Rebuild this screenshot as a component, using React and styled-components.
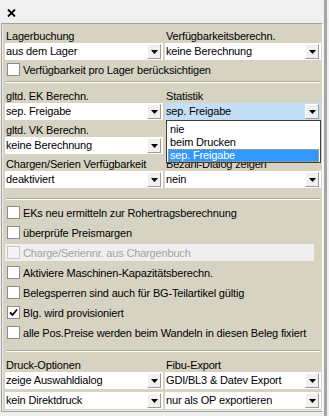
import React from 'react'
import styled, { createGlobalStyle } from 'styled-components'

const GlobalStyle = createGlobalStyle`
  html, body {
    margin: 0;
    padding: 0;
    background: #f0f0f0;
  }
  body {
    font-family: "Liberation Sans", Arial, sans-serif;
    font-size: 11px;
    color: #000;
  }
`

const Window = styled.div`
  width: 327px;
  height: 416px;
  box-sizing: border-box;
  border-right: 3px solid #a5a5a5;
  background: #f0f0f0;
  display: flex;
  flex-direction: column;
  letter-spacing: -0.17px;
`

const TitleBar = styled.div`
  height: 23px;
  flex: none;
  display: flex;
  align-items: flex-start;
  padding: 9px 0 0 7px;
  box-sizing: border-box;
`

const Panel = styled.div`
  margin-left: 1px;
  width: 322px;
  height: 389px;
  box-sizing: border-box;
  background: #d6d3c3;
  border-top: 1px solid #a0a0a0;
  border-left: 1px solid #a0a0a0;
  border-right: 1px solid #ffffff;
  border-bottom: 1px solid #a0a0a0;
  box-shadow: inset 1px 0 0 #ececec, inset 0 -1px 0 #ececec;
  padding: 2px 1px 0 3px;
  display: flex;
  flex-direction: column;
`

const Grid = styled.div`
  display: grid;
  grid-template-columns: 158px 156px;
  column-gap: 2px;
  margin-top: ${p => p.$top || 0}px;
`

const Column = styled.div`
  display: flex;
  flex-direction: column;
`

const Label = styled.div`
  height: 17px;
  box-sizing: border-box;
  padding: 4px 0 0 1px;
  line-height: 13px;
  white-space: nowrap;
  overflow: hidden;
`

const Spacer = styled.div`
  height: ${p => p.$h}px;
`

const SelectBox = styled.div`
  position: relative;
  height: 17px;
  display: flex;
  align-items: center;
  background: ${p => (p.$focused ? '#c4def5' : '#ffffff')};
  margin-top: ${p => p.$top || 0}px;
`

const SelectText = styled.div`
  flex: 1;
  padding-left: 1px;
  line-height: 17px;
  white-space: nowrap;
  overflow: hidden;
`

const ArrowButton = styled.div`
  width: 14px;
  height: 15px;
  margin-right: 2px;
  box-sizing: border-box;
  background: #f0f0f0;
  border-top: 1px solid #ffffff;
  border-left: 1px solid #ffffff;
  border-right: 1px solid #9a9a9a;
  border-bottom: 1px solid #9a9a9a;
  display: flex;
  align-items: center;
  justify-content: center;
`

const DropList = styled.div`
  position: absolute;
  z-index: 5;
  top: 17px;
  left: 1px;
  width: 155px;
  height: 43px;
  box-sizing: border-box;
  background: #ffffff;
  border: 1px solid #3c3c3c;
  padding: 2px 1px 0 1px;
`

const DropItem = styled.div`
  height: 13px;
  line-height: 13px;
  padding-left: 2px;
  box-sizing: border-box;
  background: ${p => (p.$active ? '#3399ff' : 'transparent')};
  color: ${p => (p.$active ? '#ffffff' : '#000000')};
  outline: ${p => (p.$active ? '1px dotted #e0a050' : 'none')};
  outline-offset: -1px;
`

const Separator = styled.div`
  height: 0;
  margin: ${p => p.$top}px 1px ${p => p.$bottom}px 1px;
  border-top: 1px solid #aaa797;
  border-bottom: 1px solid #ffffff;
`

const CheckRow = styled.label`
  height: 17px;
  margin: 1px 0 2px;
  padding-left: 2px;
  display: flex;
  align-items: center;
  gap: 3px;
  width: ${p => (p.$disabled ? '309px' : 'auto')};
  box-sizing: border-box;
  background: ${p => (p.$disabled ? '#efefef' : 'transparent')};
  color: ${p => (p.$disabled ? '#a3a3a3' : '#000000')};
  white-space: nowrap;
`

const Box = styled.span`
  width: 13px;
  height: 13px;
  flex: none;
  box-sizing: border-box;
  background: ${p => (p.$disabled ? '#f4f4f4' : '#ffffff')};
  border: 1px solid ${p => (p.$disabled ? '#c8c8c8' : '#8c8c8c')};
  display: flex;
  align-items: center;
  justify-content: center;
`

const CloseIcon = () => (
  <svg width="9" height="8" viewBox="0 0 9 8">
    <path d="M1 0.5 L8 7.5 M8 0.5 L1 7.5" stroke="#000" strokeWidth="1.8" />
  </svg>
)

const Arrow = () => (
  <svg width="7" height="4" viewBox="0 0 7 4">
    <polygon points="0,0 7,0 3.5,4" fill="#000" />
  </svg>
)

const Select = ({ value, focused, top, children }) => (
  <SelectBox $focused={focused} $top={top}>
    <SelectText>{value}</SelectText>
    <ArrowButton><Arrow /></ArrowButton>
    {children}
  </SelectBox>
)

const Check = ({ label, checked, disabled }) => (
  <CheckRow $disabled={disabled}>
    <Box $disabled={disabled}>
      {checked && (
        <svg width="9" height="9" viewBox="0 0 9 9">
          <path d="M1 4.5 L3.5 7 L8 1.5" stroke="#000" strokeWidth="1.8" fill="none" />
        </svg>
      )}
    </Box>
    {label}
  </CheckRow>
)

const options = [
  { label: 'EKs neu ermitteln zur Rohertragsberechnung' },
  { label: 'überprüfe Preismargen' },
  { label: 'Charge/Seriennr. aus Chargenbuch', disabled: true },
  { label: 'Aktiviere Maschinen-Kapazitätsberechn.' },
  { label: 'Belegsperren sind auch für BG-Teilartikel gültig' },
  { label: 'Blg. wird provisioniert', checked: true },
  { label: 'alle Pos.Preise werden beim Wandeln in diesen Beleg fixiert' },
]

export default function App() {
  return (
    <>
      <GlobalStyle />
      <Window>
        <TitleBar><CloseIcon /></TitleBar>
        <Panel>
          <Grid>
            <Column>
              <Label>Lagerbuchung</Label>
              <Select value="aus dem Lager" />
            </Column>
            <Column>
              <Label>Verfügbarkeitsberechn.</Label>
              <Select value="keine Berechnung" />
            </Column>
          </Grid>
          <Check label="Verfügbarkeit pro Lager berücksichtigen" />
          <Separator $top={1} $bottom={3} />

          <Grid>
            <Column>
              <Label>gltd. EK Berechn.</Label>
              <Select value="sep. Freigabe" />
              <Label>gltd. VK Berechn.</Label>
              <Select value="keine Berechnung" />
              <Label>Chargen/Serien Verfügbarkeit</Label>
              <Select value="deaktiviert" />
            </Column>
            <Column>
              <Label>Statistik</Label>
              <Select value="sep. Freigabe" focused>
                <DropList>
                  <DropItem>nie</DropItem>
                  <DropItem>beim Drucken</DropItem>
                  <DropItem $active>sep. Freigabe</DropItem>
                </DropList>
              </Select>
              <Spacer $h={34} />
              <Label>Bezahl-Dialog zeigen</Label>
              <Select value="nein" />
            </Column>
          </Grid>
          <Separator $top={10} $bottom={3} />

          {options.map(o => (
            <Check key={o.label} {...o} />
          ))}
          <Separator $top={7} $bottom={3} />

          <Grid>
            <Column>
              <Label>Druck-Optionen</Label>
              <Select value="zeige Auswahldialog" />
              <Select value="kein Direktdruck" top={3} />
            </Column>
            <Column>
              <Label>Fibu-Export</Label>
              <Select value="GDI/BL3 & Datev Export" />
              <Select value="nur als OP exportieren" top={3} />
            </Column>
          </Grid>
        </Panel>
      </Window>
    </>
  )
}
